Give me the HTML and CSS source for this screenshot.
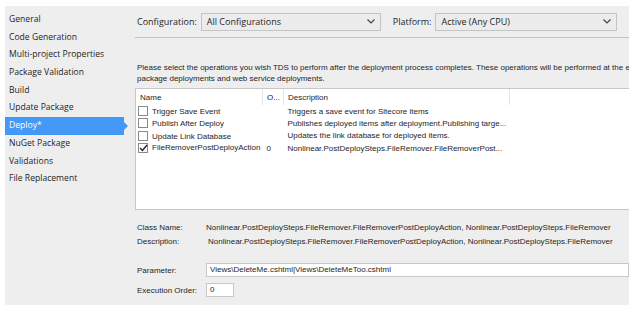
FILE: index.html
```html
<!DOCTYPE html>
<html lang="en">
<head>
    <meta charset="UTF-8">
    <title>Deploy</title>
    <link rel="stylesheet" href="styles.css">
</head>
<body>
    <div class="window">
        <ul class="nav">
            <li>General</li>
            <li>Code Generation</li>
            <li>Multi-project Properties</li>
            <li>Package Validation</li>
            <li>Build</li>
            <li>Update Package</li>
            <li class="active">Deploy*</li>
            <li>NuGet Package</li>
            <li>Validations</li>
            <li>File Replacement</li>
        </ul>
        <div class="page">
            <div class="toolbar">
                <span class="label">Configuration:</span>
                <div class="select config">
                    <span>All Configurations</span>
                    <svg width="8" height="5" viewBox="0 0 8 5"><path d="M0.5 0.5 L4 4 L7.5 0.5" fill="none" stroke="#444" stroke-width="1.2"/></svg>
                </div>
                <span class="label">Platform:</span>
                <div class="select platform">
                    <span>Active (Any CPU)</span>
                    <svg width="8" height="5" viewBox="0 0 8 5"><path d="M0.5 0.5 L4 4 L7.5 0.5" fill="none" stroke="#444" stroke-width="1.2"/></svg>
                </div>
            </div>
            <p class="intro">
                <span>Please select the operations you wish TDS to perform after the deployment process completes. These operations will be performed at the end of</span>
                <span>package deployments and web service deployments.</span>
            </p>
            <div class="list">
                <table>
                    <thead>
                        <tr>
                            <th class="c-name">Name</th>
                            <th class="c-order">O...</th>
                            <th class="c-desc">Description</th>
                            <th></th>
                        </tr>
                    </thead>
                    <tbody>
                        <tr>
                            <td><span class="check"></span>Trigger Save Event</td>
                            <td></td>
                            <td>Triggers a save event for Sitecore items</td>
                            <td></td>
                        </tr>
                        <tr>
                            <td><span class="check"></span>Publish After Deploy</td>
                            <td></td>
                            <td>Publishes deployed items after deployment.Publishing targe...</td>
                            <td></td>
                        </tr>
                        <tr>
                            <td><span class="check"></span>Update Link Database</td>
                            <td></td>
                            <td>Updates the link database for deployed items.</td>
                            <td></td>
                        </tr>
                        <tr>
                            <td><span class="check on"><svg width="9" height="8" viewBox="0 0 9 8"><path d="M1 4 L3.5 6.5 L8 1" fill="none" stroke="#222" stroke-width="1.4"/></svg></span>FileRemoverPostDeployAction</td>
                            <td>0</td>
                            <td>Nonlinear.PostDeploySteps.FileRemover.FileRemoverPost...</td>
                            <td></td>
                        </tr>
                    </tbody>
                </table>
            </div>
            <div class="details">
                <div class="row">
                    <span class="key">Class Name:</span>
                    <span class="value">Nonlinear.PostDeploySteps.FileRemover.FileRemoverPostDeployAction, Nonlinear.PostDeploySteps.FileRemover</span>
                </div>
                <div class="row">
                    <span class="key">Description:</span>
                    <span class="value shift">Nonlinear.PostDeploySteps.FileRemover.FileRemoverPostDeployAction, Nonlinear.PostDeploySteps.FileRemover</span>
                </div>
            </div>
            <div class="fields">
                <div class="row">
                    <span class="key">Parameter:</span>
                    <div class="input param">Views\DeleteMe.cshtml|Views\DeleteMeToo.cshtml</div>
                </div>
                <div class="row">
                    <span class="key">Execution Order:</span>
                    <div class="input order">0</div>
                </div>
            </div>
        </div>
    </div>
</body>
</html>
```

FILE: styles.css
```css
body {
    margin: 0;
    background-color: #ffffff;
}
.window {
    display: flex;
    width: 624px;
    height: 299px;
    margin: 6px 0 0 5px;
    background-color: #eeeeee;
    overflow: hidden;
}
.nav {
    list-style: none;
    margin: 0;
    padding: 5px 0 0;
    width: 130px;
    flex-shrink: 0;
    font-family: "Open Sans", sans-serif;
    font-size: 8.6px;
    color: #1e1e1e;
}
.nav li {
    position: relative;
    height: 17.7px;
    line-height: 17.7px;
    padding-left: 4px;
    width: 115px;
}
.nav li.active {
    background-color: #4399f5;
    color: #ffffff;
}
.nav li.active::after {
    content: "";
    position: absolute;
    right: -4px;
    top: 5px;
    border-left: 4px solid #4399f5;
    border-top: 4px solid transparent;
    border-bottom: 4px solid transparent;
}
.page {
    flex: 1;
    min-width: 0;
    overflow: hidden;
}
.toolbar {
    display: flex;
    align-items: center;
    height: 31px;
    border-bottom: 1px solid #c2c2c2;
    font-family: "Open Sans", sans-serif;
    font-size: 9px;
    color: #1e1e1e;
}
.toolbar .label {
    margin: 0 4px 0 2px;
}
.select {
    display: flex;
    align-items: center;
    justify-content: space-between;
    box-sizing: border-box;
    height: 18px;
    padding: 0 5px 0 5px;
    border: 1px solid #c4c4c4;
    background-color: #ececec;
}
.select.config {
    width: 180px;
    margin-right: 10px;
}
.select.platform {
    width: 182px;
}
.intro {
    margin: 25px 0 0 2px;
    font-family: "Liberation Sans", Arial, sans-serif;
    font-size: 8px;
    line-height: 10.5px;
    color: #1e1e1e;
    white-space: nowrap;
}
.intro span {
    display: block;
}
.list {
    margin-top: 4px;
    height: 120px;
    border: 1px solid #c8c8c8;
    border-right: none;
    background-color: #ffffff;
}
.list table {
    border-collapse: collapse;
    width: 100%;
    font-family: "Liberation Sans", Arial, sans-serif;
    font-size: 8px;
    color: #1e1e1e;
    white-space: nowrap;
}
.list th {
    font-weight: normal;
    text-align: left;
    height: 16px;
    padding: 0 0 0 4px;
    border-right: 1px solid #e5e5e5;
}
.list th:last-child {
    border-right: none;
}
.list td {
    height: 12.3px;
    padding: 0 0 0 4px;
}
.list .c-name {
    width: 122px;
}
.list .c-order {
    width: 16px;
}
.list .c-desc {
    width: 221px;
}
.check {
    display: inline-block;
    box-sizing: border-box;
    width: 10px;
    height: 10px;
    margin: 0 4px 0 -2px;
    vertical-align: -2px;
    border: 1px solid #8a8a8a;
    background-color: #ffffff;
    line-height: 0;
}
.details, .fields {
    font-family: "Liberation Sans", Arial, sans-serif;
    font-size: 8px;
    color: #1e1e1e;
    white-space: nowrap;
}
.details {
    padding-top: 10px;
}
.details .row {
    display: flex;
    height: 14.5px;
    align-items: center;
}
.key {
    width: 69px;
    flex-shrink: 0;
    padding-left: 2px;
}
.value.shift {
    padding-left: 2px;
}
.fields {
    padding-top: 11px;
}
.fields .row {
    display: flex;
    align-items: center;
    height: 20px;
}
.input {
    box-sizing: border-box;
    height: 14px;
    line-height: 12px;
    padding: 0 3px;
    border: 1px solid #c8c8c8;
    background-color: #ffffff;
}
.input.param {
    flex: 1;
}
.input.order {
    width: 28px;
}
```
